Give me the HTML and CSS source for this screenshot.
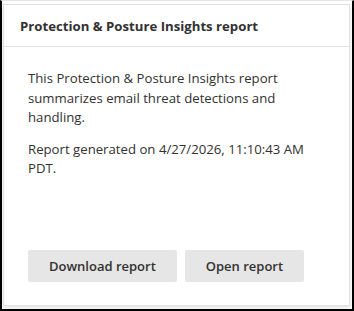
FILE: index.html
```html
<!DOCTYPE html>
<html>
<head>
<meta charset="utf-8">
<link rel="stylesheet" href="styles.css">
</head>
<body>
<div class="frame">
  <section class="card">
    <header class="card-header">
      <h2 class="title">Protection &amp; Posture Insights report</h2>
    </header>
    <div class="card-body">
      <p class="text">This Protection &amp; Posture Insights report summarizes email threat detections and handling.</p>
      <p class="text">Report generated on 4/27/2026, 11:10:43 AM PDT.</p>
      <div class="actions">
        <button class="btn">Download report</button>
        <button class="btn">Open report</button>
      </div>
    </div>
  </section>
</div>
</body>
</html>
```

FILE: styles.css
```css
html, body {
  margin: 0;
  padding: 0;
  background: #ffffff;
}
body {
  font-family: "Open Sans", "Noto Sans", sans-serif;
  color: #323130;
}
.frame {
  box-sizing: border-box;
  width: 354px;
  height: 311px;
  border-left: 2px solid #000;
  border-right: 2px solid #000;
  border-bottom: 2px solid #000;
  border-top: 1px solid #e6e6e6;
  padding: 3px 2px 3px 1px;
  display: flex;
}
.card {
  flex: 1;
  display: flex;
  flex-direction: column;
  background: #fff;
  border: 1px solid #e1e1e1;
  box-shadow: 0 1.6px 3.6px rgba(0,0,0,0.13), 0 0.3px 0.9px rgba(0,0,0,0.11);
}
.card-header {
  height: 42px;
  box-sizing: border-box;
  border-bottom: 1px solid #e1e1e1;
  padding: 0 16px;
  display: flex;
  align-items: center;
}
.title {
  margin: 0;
  font-size: 13.2px;
  font-weight: 700;
  color: #323130;
}
.card-body {
  flex: 1;
  display: flex;
  flex-direction: column;
  padding: 22px 24px 23px 24px;
}
.text {
  margin: 0 0 12px 0;
  font-size: 13.2px;
  line-height: 19.5px;
}
.actions {
  margin-top: auto;
  display: flex;
  gap: 8px;
}
.btn {
  height: 32px;
  padding: 0 21px;
  border: none;
  border-radius: 2px;
  background: #e6e6e6;
  color: #323130;
  font-family: inherit;
  font-size: 13px;
  font-weight: 600;
}
```
